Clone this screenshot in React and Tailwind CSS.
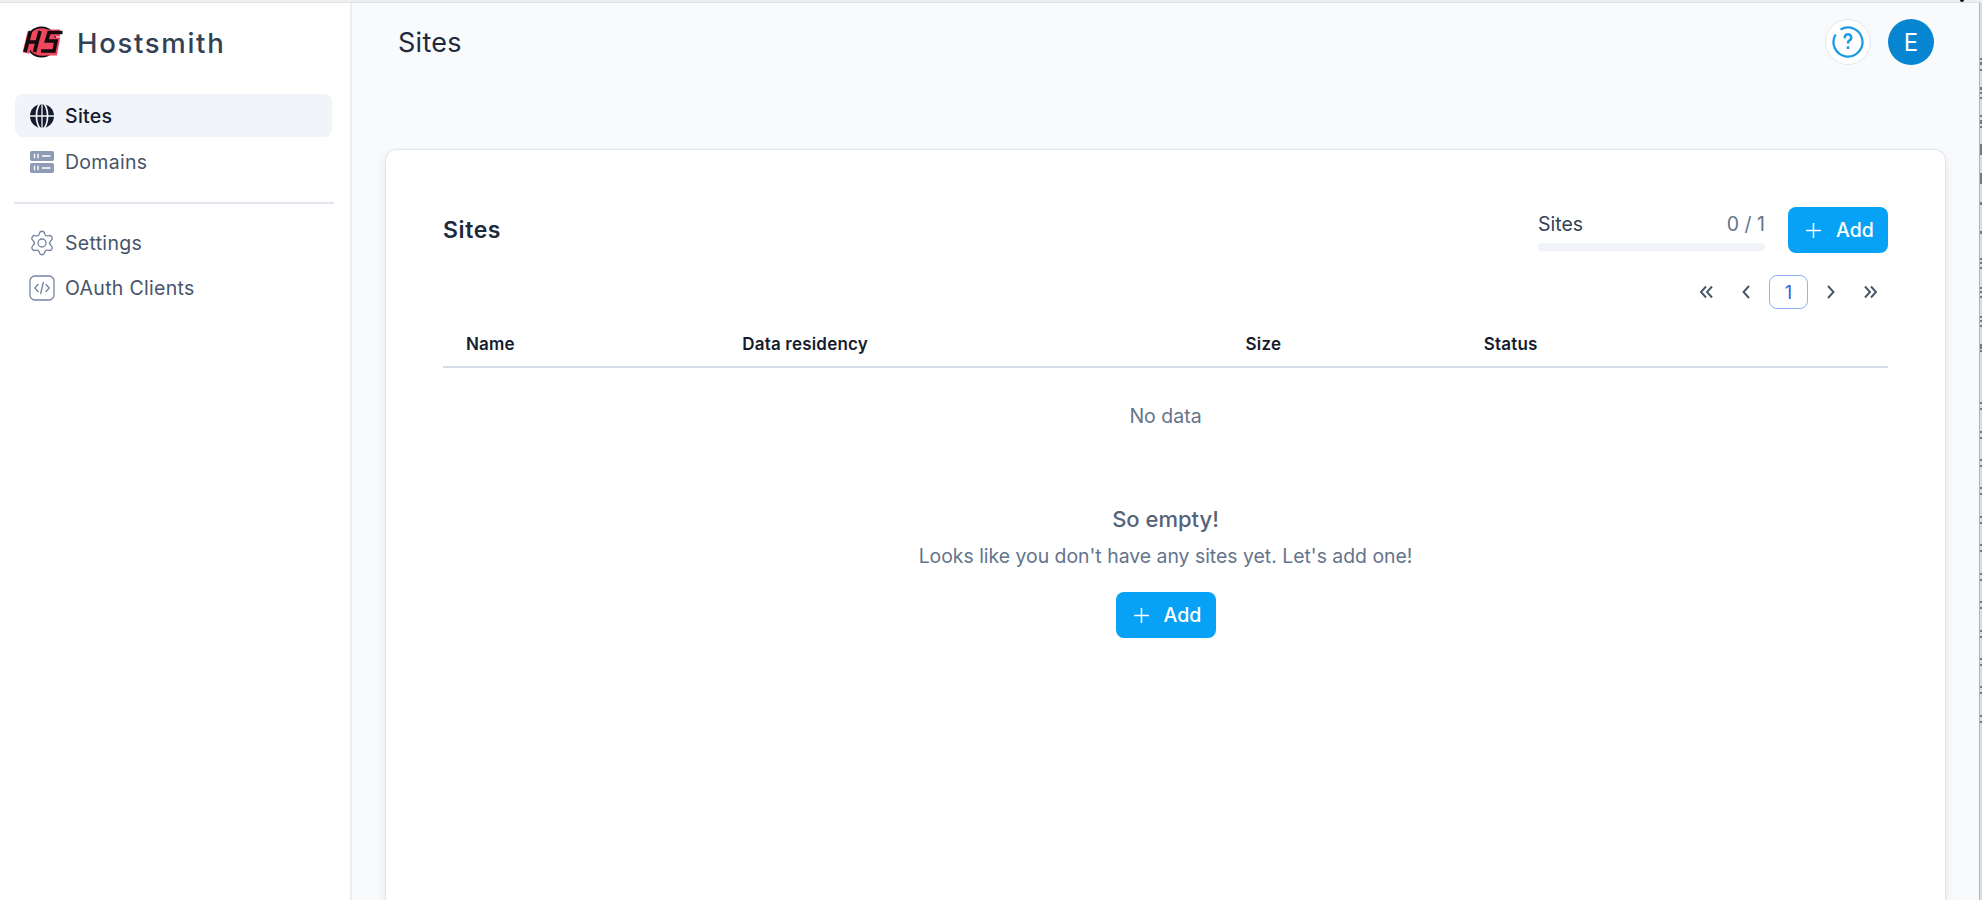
import React from 'react';
import clsx from 'clsx';

const Logo = () => (
  <svg viewBox="0 0 42 34" className="w-[42px] h-[34px] shrink-0">
    <circle cx="20.500" cy="17" r="14.600" fill="#f0475f" stroke="#140a0d" strokeWidth="1.800" />
    <g fill="none" stroke="#f0475f" strokeWidth="7">
      <path d="M10 7 5 28M20 7 14 28M39 8H28l-2 8h9l-2 11H22" />
    </g>
    <g fill="none" stroke="#140a0d" strokeWidth="3.600">
      <path d="M9.500 6 4 27M19 6 13.500 27M6 17h10M41.500 7.500H28l-2.500 8.500h9.500l-2 10H20" />
    </g>
  </svg>
);

const GlobeIcon = () => (
  <svg viewBox="0 0 24 24" className="size-6 shrink-0">
    <circle cx="12" cy="12" r="12" fill="#141c2e" />
    <g fill="none" stroke="#f1f5f9" strokeWidth="1.700">
      <ellipse cx="12" cy="12" rx="5.600" ry="13" />
      <path d="M12 0v24M0 12h24" strokeWidth="1.300" />
    </g>
  </svg>
);

const ServerIcon = () => (
  <svg viewBox="0 0 24 24" className="size-6 shrink-0">
    <rect x="0" y="1" width="24" height="10" rx="1.800" fill="#8d9bb5" />
    <rect x="0" y="13" width="24" height="10" rx="1.800" fill="#8d9bb5" />
    <path d="M4.500 3.700v4.600M8 3.700v4.600M12 6h8.500M4.500 15.700v4.600M8 15.700v4.600M12 18h8.500" stroke="#fff" strokeWidth="1.400" />
  </svg>
);

const GearIcon = () => (
  <svg viewBox="0 0 26 26" className="size-[26px] shrink-0" fill="none" stroke="#7484a0" strokeWidth="1.300" strokeLinejoin="round">
    <path d="M10.400 3.200a2.700 2.700 0 0 1 5.200 0l.4 1.400a2 2 0 0 0 2.300 1.300l1.500-.3a2.700 2.700 0 0 1 2.600 4.500l-1 1.100a2.600 2.600 0 0 0 0 3.600l1 1.100a2.700 2.700 0 0 1-2.600 4.500l-1.500-.3a2 2 0 0 0-2.300 1.300l-.4 1.400a2.700 2.700 0 0 1-5.200 0l-.4-1.400a2 2 0 0 0-2.300-1.300l-1.500.3a2.700 2.700 0 0 1-2.600-4.500l1-1.100a2.600 2.600 0 0 0 0-3.600l-1-1.100a2.700 2.700 0 0 1 2.600-4.500l1.500.3a2 2 0 0 0 2.300-1.300z" />
    <circle cx="13" cy="13" r="4" />
  </svg>
);

const CodeIcon = () => (
  <svg viewBox="0 0 26 26" className="size-[26px] shrink-0" fill="none" stroke="#7484a0" strokeWidth="1.300" strokeLinecap="round" strokeLinejoin="round">
    <rect x="1" y="1" width="24" height="24" rx="5" />
    <path d="M9 9.500 5.800 13 9 16.500M17 9.500l3.200 3.500-3.200 3.500M14.300 7.500l-2.600 11" />
  </svg>
);

const HelpIcon = () => (
  <svg viewBox="0 0 32 32" className="size-8" fill="none" stroke="#1b9be0" strokeWidth="2.300">
    <path d="M8.500 3.600A14.500 14.500 0 1 1 3.600 8.500" />
    <path d="M12.800 12.200v-.8a3.200 3.200 0 1 1 4.900 2.800c-1.200.7-1.700 1.300-1.700 3.400M16 20.300v2.600" strokeWidth="2.600" />
  </svg>
);

const Chevron = ({ d }) => (
  <svg viewBox="0 0 16 16" className="size-4" fill="none" stroke="#475569" strokeWidth="1.900">
    <path d={d} />
  </svg>
);

const NavItem = ({ icon, label, active }) => (
  <a
    className={clsx(
      'flex items-center h-[43px] pl-[14px] gap-[10px] rounded-lg text-[19.500px] tracking-[0.300px]',
      active ? 'bg-[#f1f4f9] text-[#141c2e] font-medium' : 'text-[#475569]'
    )}
  >
    <span className="w-[26px] flex justify-center">{icon}</span>
    <span className="pt-[2px]">{label}</span>
  </a>
);

const AddButton = () => (
  <button className="flex items-center h-[46px] w-[100px] pl-[18px] gap-[16px] rounded-lg bg-[#07a2f5] text-white text-[19.500px] font-medium">
    <svg viewBox="0 0 14 14" className="size-[15px] shrink-0" stroke="#fff" strokeWidth="1.400">
      <path d="M7 0v14M0 7h14" />
    </svg>
    <span className="pt-[2px] -ml-px">Add</span>
  </button>
);

const COLUMNS = [
  { label: 'Name', width: 'w-[276px]' },
  { label: 'Data residency', width: 'w-[503px]' },
  { label: 'Size', width: 'w-[238px]' },
  { label: 'Status', width: 'w-[427px]' },
];

// Clipped text of the window behind the right edge: [top, height]
const MARKS = [
  [58, 2], [62, 3], [69, 2], [87, 3], [92, 2], [97, 2], [115, 2], [120, 4], [126, 2],
  [144, 11], [173, 11], [202, 3], [231, 3],
  [258, 2], [262, 2], [267, 2], [287, 2], [291, 2], [296, 2], [316, 2], [320, 2], [325, 2], [344, 5], [350, 2],
  [402, 2], [408, 2], [431, 2], [437, 2], [459, 2], [465, 2], [487, 2], [493, 2],
  [516, 2], [522, 2], [544, 2], [550, 2], [573, 2], [579, 2], [601, 2], [607, 2],
  [630, 2], [636, 2], [658, 2], [664, 2], [686, 2], [692, 2], [715, 2], [721, 2],
];

export default function App() {
  return (
    <div className="relative flex flex-col w-[1982px] h-[900px] overflow-hidden bg-[#f8fafc] font-['Inter',sans-serif]">
      <div className="h-[3px] shrink-0 bg-[#eeeff1] border-b border-[#dfe1e5]" />
      <div className="absolute left-[1959px] -top-[3px] size-[6px] rounded-full bg-black border border-white" />
      <div className="flex flex-1 min-h-0">
        <aside className="w-[352px] shrink-0 bg-white border-r-2 border-[#e9edf2]">
          <div className="flex items-center h-[78px] pl-[21px] gap-[14px]">
            <Logo />
            <span className="pt-[3px] text-[27.500px] font-medium tracking-[1.700px] text-[#334155]">Hostsmith</span>
          </div>
          <nav className="flex flex-col gap-[3px] mt-[13px] ml-[15px] mr-[18px]">
            <NavItem icon={<GlobeIcon />} label="Sites" active />
            <NavItem icon={<ServerIcon />} label="Domains" />
          </nav>
          <div className="h-[1.500px] bg-[#e2e6ec] mt-[19px] ml-[14px] mr-4" />
          <nav className="flex flex-col gap-[2px] mt-[18px] ml-[15px] mr-[18px]">
            <NavItem icon={<GearIcon />} label="Settings" />
            <NavItem icon={<CodeIcon />} label="OAuth Clients" />
          </nav>
        </aside>

        <main className="flex flex-col flex-1 min-w-0">
          <header className="flex items-center justify-between h-[78px] shrink-0 pl-[46px] pr-[45px]">
            <h1 className="pt-[2px] text-[27px] tracking-[0.300px] text-[#1e293b]">Sites</h1>
            <div className="flex items-center gap-[17px]">
              <div className="size-[46px] rounded-full bg-white border border-[#e2e8f0] flex items-center justify-center">
                <HelpIcon />
              </div>
              <div className="size-[46px] rounded-full bg-[#0685d1] text-white text-[24px] flex items-center justify-center pt-px">E</div>
            </div>
          </header>

          <section className="flex-1 mt-[68px] ml-[33px] mr-[33px] rounded-t-xl bg-white border border-b-0 border-[#dfe5ed] shadow-[0_4px_10px_rgba(100,116,139,0.12)] px-[57px] pt-[57px]">
            <div className="flex items-center justify-between h-[46px]">
              <h2 className="text-[23px] tracking-[0.600px] font-semibold text-[#1e293b] pt-px">Sites</h2>
              <div className="flex items-center gap-[23px]">
                <div className="w-[227px]">
                  <div className="flex justify-between text-[19.500px] leading-[25px] mt-[2px]">
                    <span className="text-[#334155]">Sites</span>
                    <span className="text-[#64748b]">0 / 1</span>
                  </div>
                  <div className="h-2 mt-[6px] rounded bg-[#f0f3f8]" />
                </div>
                <AddButton />
              </div>
            </div>

            <div className="flex items-center justify-end h-[34px] mt-[22px] pr-[9px]">
              <Chevron d="M8 2.500 3 8l5 5.500M14 2.500 9 8l5 5.500" />
              <span className="ml-6 mr-[15px] flex"><Chevron d="m11 2-5.500 6 5.500 6" /></span>
              <span className="w-[39px] h-[34px] rounded-lg border border-[#8fb0f5] text-[#2f62d9] text-lg flex items-center justify-center pt-px">1</span>
              <span className="ml-[15px] mr-6 flex"><Chevron d="m5 2 5.500 6L5 14" /></span>
              <Chevron d="m2 2.500 5 5.500-5 5.500M8 2.500l5 5.500-5 5.500" />
            </div>

            <table className="w-full mt-[12px] table-fixed">
              <thead>
                <tr className="h-[46px] border-b-2 border-[#d3dce8] text-left text-[17px] tracking-[0.200px] text-[#141c2e]">
                  {COLUMNS.map((c) => (
                    <th key={c.label} className={clsx('pl-[23px] pt-[2px] font-semibold', c.width)}>{c.label}</th>
                  ))}
                </tr>
              </thead>
              <tbody>
                <tr>
                  <td colSpan={4} className="h-[98px] text-center text-[19.500px] text-[#64748b]">No data</td>
                </tr>
              </tbody>
            </table>

            <div className="flex flex-col items-center mt-[36px] text-[#64748b]">
              <h3 className="text-[22px] leading-[36px] font-medium text-[#566379]">So empty!</h3>
              <p className="text-[19.400px] leading-[38px] mb-[17px]">Looks like you don't have any sites yet. Let's add one!</p>
              <AddButton />
            </div>
          </section>
        </main>

        <div className="relative w-[3px] shrink-0 bg-[#dcdddf] border-l border-[#b4b6b9]">
          {MARKS.map(([top, height]) => (
            <span key={top} className="absolute left-0 w-[2px] bg-[#77797c]" style={{ top: top - 3, height }} />
          ))}
        </div>
      </div>
    </div>
  );
}
